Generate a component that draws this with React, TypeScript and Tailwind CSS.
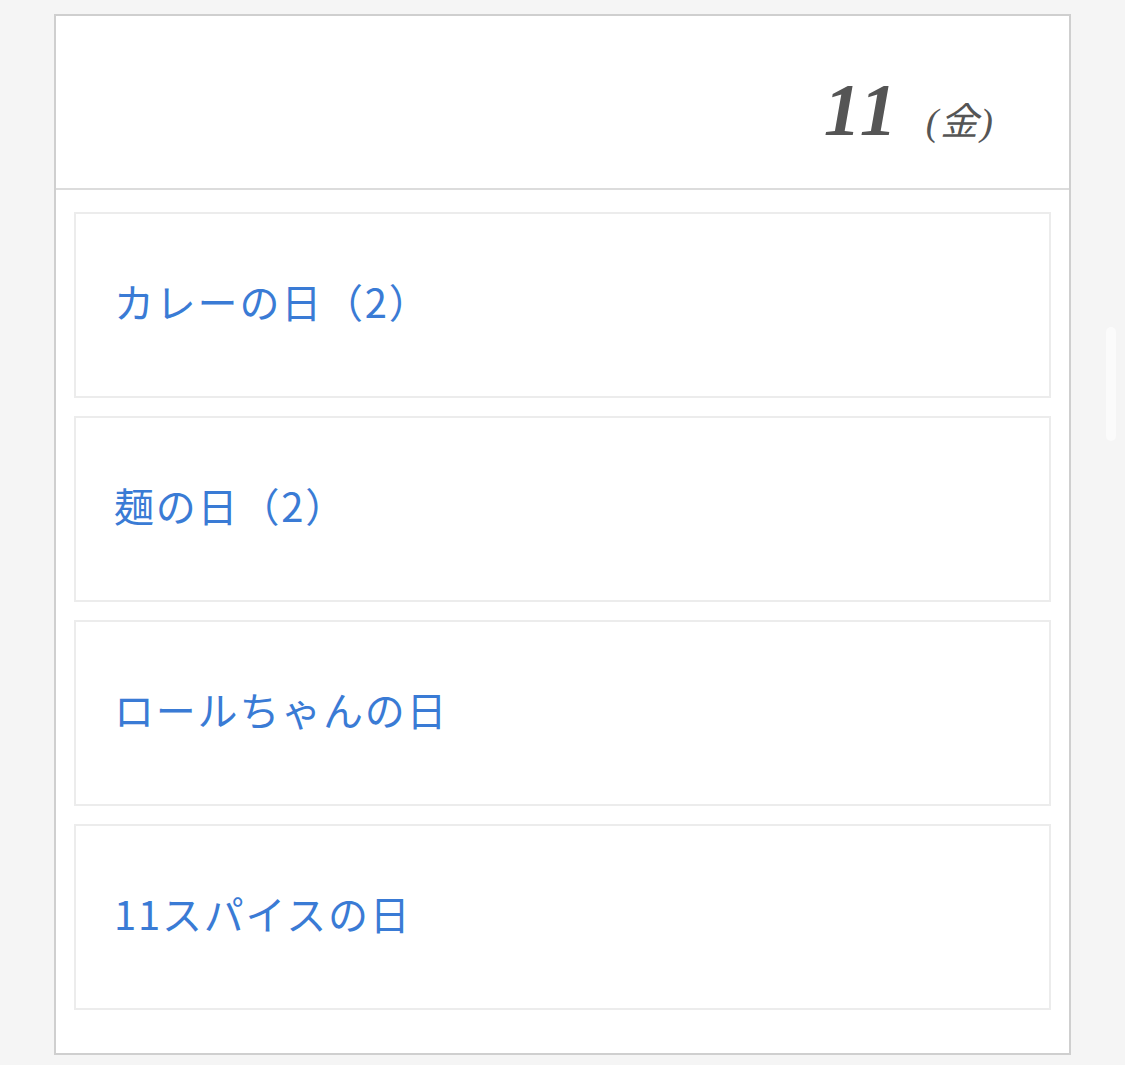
const days = ["カレーの日（2）", "麺の日（2）", "ロールちゃんの日", "11スパイスの日"];

const EventRow = ({ label }: { label: string }) => {
  return (
    <a
      href="#"
      className="flex h-[186px] items-center border-2 border-[#ececec] bg-white pb-[8px] pl-[38px] text-[40px] leading-none tracking-[1.8px] text-[#3a7bd5]"
    >
      {label}
    </a>
  );
};

const App = () => {
  return (
    <div className="relative min-h-[1065px] w-full bg-[#f5f5f5] pt-[14px] pl-[54px] font-['Noto_Sans_CJK_JP',sans-serif]">
      <div className="w-[1017px] border-2 border-[#cfcfcf] bg-white">
        <div className="flex h-[174px] items-baseline justify-end border-b-2 border-[#dcdcdc] pt-[57px] pr-[74px]">
          <span className="font-['Liberation_Serif',serif] text-[74px] font-bold italic leading-none tracking-[3px] text-[#555]">
            11
          </span>
          <span className="ml-[26px] font-['Liberation_Serif','Noto_Sans_CJK_JP',serif] text-[38px] italic leading-none tracking-[2px] text-[#555]">
            (金)
          </span>
        </div>
        <div className="flex flex-col gap-[18px] px-[18px] pt-[22px] pb-[43px]">
          {days.map((d) => (
            <EventRow key={d} label={d} />
          ))}
        </div>
      </div>
      {/* overlay scrollbar thumb */}
      <div className="absolute top-[327px] left-[1106px] h-[114px] w-[10px] rounded-full bg-white/60" />
    </div>
  );
};

export default App;
